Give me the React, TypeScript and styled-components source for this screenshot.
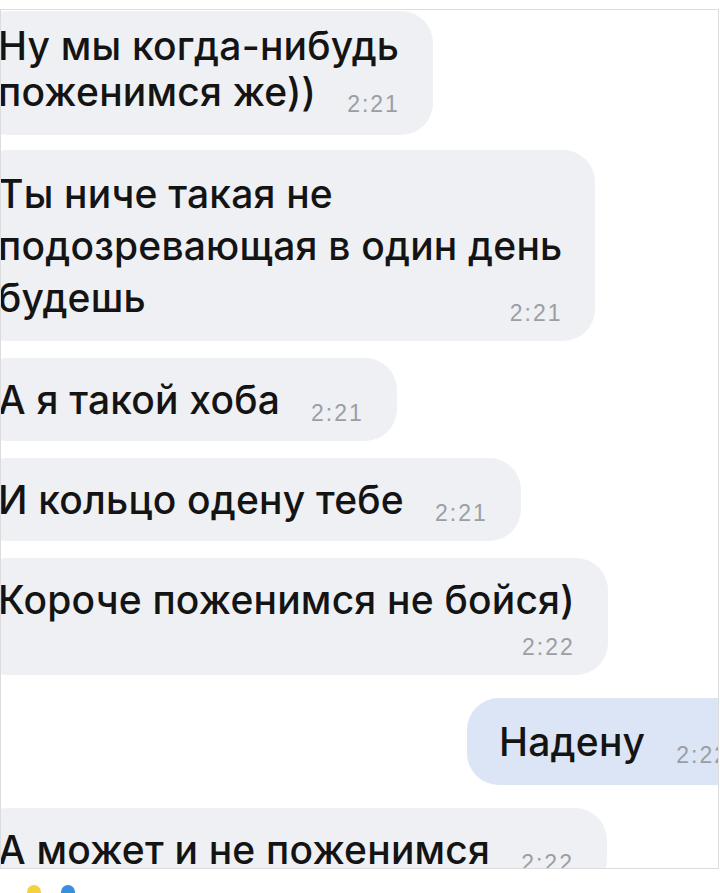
import React from "react";
import styled, { createGlobalStyle } from "styled-components";

const GlobalStyle = createGlobalStyle`
  html, body {
    margin: 0;
    padding: 0;
    background: #ffffff;
  }
  body {
    font-family: Inter, "Liberation Sans", Arial, sans-serif;
    overflow: hidden;
  }
`;

const Page = styled.div`
  width: 720px;
  height: 893px;
  padding-top: 9px;
  box-sizing: border-box;
  overflow: hidden;
`;

const Frame = styled.div`
  width: 719px;
  height: 860px;
  box-sizing: border-box;
  border: 1px solid #dcdcdc;
  overflow: hidden;
  display: flex;
  flex-direction: column;
  gap: 17px;
  padding-top: 1px;
`;

const Row = styled.div<{ $mine?: boolean }>`
  display: flex;
  justify-content: ${(p) => (p.$mine ? "flex-end" : "flex-start")};
  margin: ${(p) => (p.$mine ? "6px -44px 6px 0" : "0")};
`;

const Bubble = styled.div<{ $mine?: boolean; $tight?: boolean }>`
  display: flex;
  flex-direction: column;
  padding-top: ${(p) => (p.$tight ? 12 : p.$mine ? 20 : 18)}px;
  padding-bottom: ${(p) => (p.$tight ? 20 : p.$mine ? 19 : 17)}px;
  padding-left: ${(p) => (p.$mine ? 32 : 22)}px;
  padding-right: 33px;
  margin-left: ${(p) => (p.$mine ? 0 : -25)}px;
  margin-bottom: ${(p) => (p.$tight ? -2 : 0)}px;
  border-radius: 32px;
  background: ${(p) => (p.$mine ? "#dbe5f5" : "#eef0f3")};
  color: #141414;
  font-family: Inter, "Liberation Sans", Arial, sans-serif;
  font-size: 39px;
  font-weight: 500;
  letter-spacing: 0.2px;
`;

const Line = styled.div<{ $lh: number }>`
  line-height: ${(p) => p.$lh}px;
  white-space: nowrap;
`;

const LastLine = styled.div<{ $lh: number; $below?: boolean }>`
  display: flex;
  justify-content: space-between;
  align-items: flex-end;
  gap: 31px;
  line-height: ${(p) => p.$lh}px;
  white-space: nowrap;
  margin-top: ${(p) => (p.$below ? 12 : 0)}px;
`;

const Time = styled.span`
  font-family: "Liberation Sans", Arial, sans-serif;
  font-size: 23px;
  font-weight: 400;
  line-height: 22px;
  letter-spacing: 2px;
  color: #9a9ea5;
`;

const Footer = styled.div`
  display: flex;
  gap: 20px;
  padding: 16px 0 0 27px;
`;

const Dot = styled.span<{ $color: string }>`
  width: 14px;
  height: 14px;
  border-radius: 50%;
  background: ${(p) => p.$color};
`;

type Message = {
  lines: string[];
  time: string;
  lh?: number;
  tight?: boolean;
  mine?: boolean;
  timeBelow?: boolean;
};

const messages: Message[] = [
  { lines: ["Ну мы когда-нибудь", "поженимся же))"], time: "2:21", lh: 46, tight: true },
  { lines: ["Ты ниче такая не", "подозревающая в один день", "будешь"], time: "2:21", lh: 52 },
  { lines: ["А я такой хоба"], time: "2:21" },
  { lines: ["И кольцо одену тебе"], time: "2:21" },
  { lines: ["Короче поженимся не бойся)"], time: "2:22", timeBelow: true },
  { lines: ["Надену"], time: "2:22", mine: true },
  { lines: ["А может и не поженимся"], time: "2:22" },
];

const ChatBubble = ({ m }: { m: Message }) => {
  const lh = m.lh ?? 48;
  const head = m.timeBelow ? m.lines : m.lines.slice(0, -1);
  const tail = m.timeBelow ? "" : m.lines[m.lines.length - 1];

  return (
    <Row $mine={m.mine}>
      <Bubble $mine={m.mine} $tight={m.tight}>
        {head.map((l) => (
          <Line key={l} $lh={lh}>
            {l}
          </Line>
        ))}
        <LastLine $lh={lh} $below={m.timeBelow}>
          <span>{tail}</span>
          <Time>{m.time}</Time>
        </LastLine>
      </Bubble>
    </Row>
  );
};

export default function App() {
  return (
    <Page>
      <GlobalStyle />
      <Frame>
        {messages.map((m, i) => (
          <ChatBubble key={i} m={m} />
        ))}
      </Frame>
      <Footer>
        <Dot $color="#f3d13f" />
        <Dot $color="#3a8ee2" />
      </Footer>
    </Page>
  );
}
